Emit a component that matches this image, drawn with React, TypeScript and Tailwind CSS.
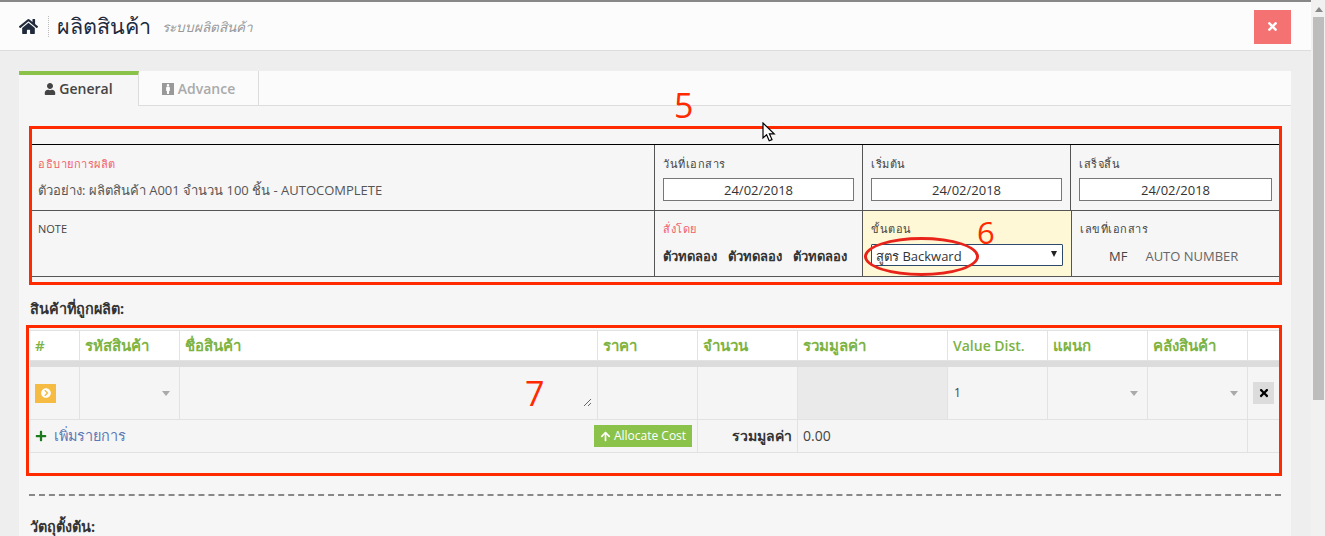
import { FaArrowUp, FaChevronCircleRight, FaHome, FaPlus, FaTimes, FaUser, FaMale } from "react-icons/fa";

const FONT = "font-['Open_Sans','Noto_Sans','DejaVu_Sans',sans-serif]";

const columns = [
  { label: "#", width: "w-[50px]" },
  { label: "รหัสสินค้า", width: "w-[100px]" },
  { label: "ชื่อสินค้า", width: "w-[418px]" },
  { label: "ราคา", width: "w-[100px]" },
  { label: "จำนวน", width: "w-[100px]" },
  { label: "รวมมูลค่า", width: "w-[150px]" },
  { label: "Value Dist.", width: "w-[100px]" },
  { label: "แผนก", width: "w-[100px]" },
  { label: "คลังสินค้า", width: "w-[100px]" },
  { label: "", width: "flex-1" },
];

function Caret() {
  return <span className="ml-auto mr-[9px] h-0 w-0 border-x-[4px] border-t-[5px] border-x-transparent border-t-[#aaa]" />;
}

function DateCell({ label, last }: { label: string; last?: boolean }) {
  return (
    <div className={`${last ? "flex-1" : "w-[208px] border-r border-[#555]"} px-2 pt-[10px]`}>
      <div className="h-[17px] text-[11px] leading-[17px] tracking-[0.5px] text-[#444]">{label}</div>
      <div className="mt-[6px] h-[23px] border border-[#777] bg-white text-center text-[13px] leading-[22px] text-[#333]">
        24/02/2018
      </div>
    </div>
  );
}

function ProductionForm() {
  return (
    <div className="mx-[11px] mt-[38px] border-t border-black">
      <div className="flex h-[66px] border-b border-[#555]">
        <div className="w-[625px] border-r border-[#555] px-2 pt-[10px]">
          <div className="h-[17px] text-[11px] leading-[17px] tracking-[0.5px] text-[#f0606a]">อธิบายการผลิต</div>
          <div className="mt-[7px] text-[13px] leading-[23px] text-[#555]">
            ตัวอย่าง: ผลิตสินค้า A001 จำนวน 100 ชิ้น - AUTOCOMPLETE
          </div>
        </div>
        <DateCell label="วันที่เอกสาร" />
        <DateCell label="เริ่มต้น" />
        <DateCell label="เสร็จสิ้น" last />
      </div>
      <div className="flex h-[66px] border-b border-[#555]">
        <div className="w-[625px] border-r border-[#555] px-2 pt-[9px] text-[11px] leading-[17px] text-[#444]">NOTE</div>
        <div className="w-[208px] border-r border-[#555] px-2 pt-[9px]">
          <div className="h-[17px] text-[11px] leading-[17px] tracking-[0.5px] text-[#f0606a]">สั่งโดย</div>
          <div className="mt-[9px] flex gap-[11px] text-[13px] leading-[20px] font-semibold whitespace-nowrap text-[#333]">
            <span>ตัวทดลอง</span>
            <span>ตัวทดลอง</span>
            <span>ตัวทดลอง</span>
          </div>
        </div>
        <div className="w-[209px] border-r border-[#555] bg-[#fff8d6] px-2 pt-[9px]">
          <div className="h-[17px] text-[11px] leading-[17px] tracking-[0.5px] text-[#444]">ขั้นตอน</div>
          <div className="mt-[7px] flex h-[22px] items-center rounded-[1px] border border-[#2d4a6e] bg-white pt-[3px] pl-[4px] text-[13px] text-[#333]">
            สูตร Backward
            <span className="ml-auto mr-[5px] mb-[6px] h-0 w-0 border-x-[3px] border-t-[6px] border-x-transparent border-t-[#222]" />
          </div>
        </div>
        <div className="flex-1 px-2 pt-[9px]">
          <div className="h-[17px] text-[11px] leading-[17px] tracking-[0.5px] text-[#444]">เลขที่เอกสาร</div>
          <div className="mt-[9px] flex pl-[29px] text-[13px] leading-[20px] text-[#666]">
            <span className="text-[#444]">MF</span>
            <span className="ml-[18px]">AUTO NUMBER</span>
          </div>
        </div>
      </div>
    </div>
  );
}

function ProductTable() {
  return (
    <div className="mx-[11px] mt-[11px]">
      <div className="flex h-[31px] border-y border-[#e2e2e2] bg-white">
        {columns.map((c, i) => (
          <div
            key={i}
            className={`${c.width} border-r border-[#e2e2e2] pl-[5px] leading-[29px] font-semibold whitespace-nowrap text-[#7cb342] ${
              c.label === "Value Dist." ? "text-[14px]" : "text-[15px]"
            }`}
          >
            {c.label}
          </div>
        ))}
      </div>
      <div className="h-[6px] bg-[#dcdcdc]" />
      <div className="flex h-[53px] border-b border-[#e2e2e2] bg-[#f5f5f5] text-[12px] text-[#444]">
        <div className="flex w-[50px] items-center border-r border-[#e2e2e2] pl-[5px]">
          <span className="flex h-[19px] w-[21px] items-center justify-center bg-[#f6bb42] text-[10px] text-white">
            <FaChevronCircleRight />
          </span>
        </div>
        <div className="flex w-[100px] items-center border-r border-[#e2e2e2]">
          <Caret />
        </div>
        <div className="relative w-[418px] border-r border-[#e2e2e2]">
          {/* textarea resize handle */}
          <svg className="absolute right-[5px] bottom-[12px] h-[9px] w-[9px]" viewBox="0 0 9 9" aria-hidden="true">
            <path d="M1 8 8 1M5 8 8 5" stroke="#666" strokeWidth="1" fill="none" />
          </svg>
        </div>
        <div className="w-[100px] border-r border-[#e2e2e2]" />
        <div className="w-[100px] border-r border-[#e2e2e2]" />
        <div className="w-[150px] border-r border-[#e2e2e2] bg-[#eaeaea]" />
        <div className="flex w-[100px] items-center border-r border-[#e2e2e2] pl-[6px]">1</div>
        <div className="flex w-[100px] items-center border-r border-[#e2e2e2]">
          <Caret />
        </div>
        <div className="flex w-[100px] items-center border-r border-[#e2e2e2]">
          <Caret />
        </div>
        <div className="flex flex-1 items-center pl-[5px]">
          <span className="flex h-[22px] w-[21px] items-center justify-center bg-[#dcdcdc] text-[12px] text-black">
            <FaTimes />
          </span>
        </div>
      </div>
      <div className="flex h-[33px] border-b border-[#e2e2e2] bg-[#f5f5f5] text-[14px]">
        <div className="flex w-[668px] items-center border-r border-[#e2e2e2] pl-[5px]">
          <FaPlus className="text-[12px] text-[#1b7a1b]" />
          <span className="ml-[7px] text-[14.4px] text-[#5b79b5]">เพิ่มรายการ</span>
          <span className="ml-auto mr-[5px] flex h-[22px] w-[98px] items-center justify-center gap-[3px] bg-[#8bc34a] text-[12px] text-white">
            <FaArrowUp className="text-[11px]" />
            Allocate Cost
          </span>
        </div>
        <div className="w-[100px] border-r border-[#e2e2e2] pr-[5px] text-right leading-[31px] font-semibold text-[#333]">
          รวมมูลค่า
        </div>
        <div className="w-[450px] border-r border-[#e2e2e2] pl-[5px] leading-[31px] text-[#444]">0.00</div>
      </div>
    </div>
  );
}

function Annotations() {
  return (
    <>
      <div className="absolute top-[126px] left-[29px] h-[159px] w-[1253px] border-[3px] border-[#ff2a00]" />
      <div className="absolute top-[325px] left-[26px] h-[151px] w-[1256px] border-[3px] border-[#ff2a00]" />
      <div className="absolute top-[237px] left-[864px] h-[39px] w-[115px] rounded-[50%] border-[3px] border-[#e8241a]" />
      <span className="absolute top-[82px] left-[674px] text-[34px] leading-[46px] text-[#ff2a00]">5</span>
      <span className="absolute top-[211px] left-[977px] text-[31px] leading-[42px] text-[#ff2a00]">6</span>
      <span className="absolute top-[370px] left-[525px] text-[34px] leading-[46px] text-[#ff2a00]">7</span>
      <svg className="absolute top-[122px] left-[762px] h-[21px] w-[15px]" viewBox="0 0 15 21" aria-hidden="true">
        <path d="M1 1v15l3.6-3.2 2.6 6 2.8-1.2-2.6-5.8h4.8z" fill="#fff" stroke="#000" strokeWidth="1.2" />
      </svg>
    </>
  );
}

export default function App() {
  return (
    <div className={`relative flex h-[536px] w-[1325px] overflow-hidden bg-[#eee] ${FONT}`}>
      <div className="flex w-[1311px] flex-col">
        <div className="h-[2px] shrink-0 bg-[#888]" />
        <header className="flex h-[49px] shrink-0 items-center border-b border-[#ddd] bg-[#fcfcfc] pl-[19px]">
          <FaHome className="text-[19px] text-[#1f2a3c]" />
          <span className="ml-[10px] h-[21px] border-l border-dotted border-[#bbb]" />
          <h1 className="ml-[8px] text-[21.5px] leading-[28px] text-[#1f2a3c]">ผลิตสินค้า</h1>
          <span className="ml-[11px] pt-[3px] text-[13.5px] text-[#999] italic">ระบบผลิตสินค้า</span>
          <button className="mt-[1px] mr-[20px] ml-auto flex h-[34px] w-[37px] items-center justify-center bg-[#f47272] text-[13px] text-white">
            <FaTimes />
          </button>
        </header>
        <main className="mx-[20px] mt-[20px] ml-[19px] min-h-0 flex-1 rounded-t-[3px] bg-[#f6f6f6]">
          <nav className="flex h-[35px] border-b border-[#ddd] bg-[#fbfbfb]">
            <div className="-mb-px flex w-[120px] items-center justify-center gap-[3px] border-t-[4px] border-r border-[#ddd] border-t-[#8bc34a] bg-[#f6f6f6] pb-[4px] text-[14px] font-semibold text-[#444]">
              <FaUser className="text-[12px]" />
              General
            </div>
            <div className="flex w-[120px] items-center justify-center gap-[4px] border-r border-[#ddd] pt-[1px] text-[14px] font-semibold text-[#aaa]">
              <span className="flex h-[12px] w-[12px] items-center justify-center bg-[#999] text-[10px] text-white">
                <FaMale />
              </span>
              Advance
            </div>
          </nav>
          <ProductionForm />
          <h2 className="mt-[22px] ml-[11px] text-[14.4px] leading-[20px] font-bold text-[#333]">สินค้าที่ถูกผลิต:</h2>
          <ProductTable />
          <div className="mx-[10px] mt-[41px] border-t-2 border-dashed border-[#888]" />
          <h2 className="mt-[21px] ml-[11px] text-[14.4px] leading-[20px] font-bold text-[#333]">วัตถุตั้งต้น:</h2>
        </main>
      </div>
      <div className="flex flex-1 flex-col items-center bg-[#f1f1f1] pl-[1px]">
        <span className="mt-[7px] h-0 w-0 border-x-[4px] border-b-[5px] border-x-transparent border-b-[#888]" />
        <div className="mt-[5px] h-[383px] w-[11px] bg-[#bdbdbd]" />
      </div>
      <Annotations />
    </div>
  );
}
